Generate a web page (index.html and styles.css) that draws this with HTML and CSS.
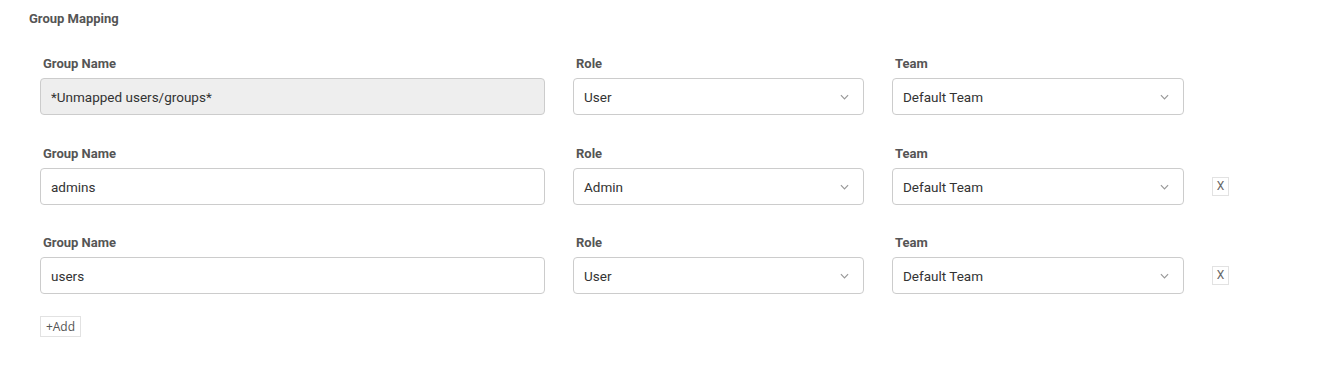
FILE: index.html
```html
<!DOCTYPE html>
<html lang="en">
<head>
    <meta charset="UTF-8">
    <meta name="viewport" content="width=device-width, initial-scale=1.0">
    <title>Group Mapping</title>
    <link rel="stylesheet" href="styles.css">
</head>
<body>
    <div class="section">
        <h3 class="section-title">Group Mapping</h3>

        <div class="mapping-list">
            <div class="mapping-row">
                <div class="field">
                    <label class="field-label">Group Name</label>
                    <input class="text-input" type="text" value="*Unmapped users/groups*" disabled>
                </div>
                <div class="field">
                    <label class="field-label">Role</label>
                    <div class="select">
                        <span>User</span>
                        <svg class="chevron" viewBox="0 0 10 6" width="10" height="6"><path d="M1 1l4 4 4-4" fill="none" stroke="#999" stroke-width="1.3"/></svg>
                    </div>
                </div>
                <div class="field">
                    <label class="field-label">Team</label>
                    <div class="select">
                        <span>Default Team</span>
                        <svg class="chevron" viewBox="0 0 10 6" width="10" height="6"><path d="M1 1l4 4 4-4" fill="none" stroke="#999" stroke-width="1.3"/></svg>
                    </div>
                </div>
                <div class="remove-cell"></div>
            </div>

            <div class="mapping-row">
                <div class="field">
                    <label class="field-label">Group Name</label>
                    <input class="text-input" type="text" value="admins">
                </div>
                <div class="field">
                    <label class="field-label">Role</label>
                    <div class="select">
                        <span>Admin</span>
                        <svg class="chevron" viewBox="0 0 10 6" width="10" height="6"><path d="M1 1l4 4 4-4" fill="none" stroke="#999" stroke-width="1.3"/></svg>
                    </div>
                </div>
                <div class="field">
                    <label class="field-label">Team</label>
                    <div class="select">
                        <span>Default Team</span>
                        <svg class="chevron" viewBox="0 0 10 6" width="10" height="6"><path d="M1 1l4 4 4-4" fill="none" stroke="#999" stroke-width="1.3"/></svg>
                    </div>
                </div>
                <div class="remove-cell">
                    <button class="small-btn remove-btn">X</button>
                </div>
            </div>

            <div class="mapping-row">
                <div class="field">
                    <label class="field-label">Group Name</label>
                    <input class="text-input" type="text" value="users">
                </div>
                <div class="field">
                    <label class="field-label">Role</label>
                    <div class="select">
                        <span>User</span>
                        <svg class="chevron" viewBox="0 0 10 6" width="10" height="6"><path d="M1 1l4 4 4-4" fill="none" stroke="#999" stroke-width="1.3"/></svg>
                    </div>
                </div>
                <div class="field">
                    <label class="field-label">Team</label>
                    <div class="select">
                        <span>Default Team</span>
                        <svg class="chevron" viewBox="0 0 10 6" width="10" height="6"><path d="M1 1l4 4 4-4" fill="none" stroke="#999" stroke-width="1.3"/></svg>
                    </div>
                </div>
                <div class="remove-cell">
                    <button class="small-btn remove-btn">X</button>
                </div>
            </div>

            <div class="add-row">
                <button class="small-btn add-btn">+Add</button>
            </div>
        </div>
    </div>
</body>
</html>
```

FILE: styles.css
```css
* {
    margin: 0;
    padding: 0;
    box-sizing: border-box;
}

body {
    font-family: Roboto, "Liberation Sans", Arial, sans-serif;
    background: #fff;
    color: #333;
}

.section {
    padding: 11px 0 0 29px;
}

.section-title {
    font-size: 13px;
    line-height: 15px;
    font-weight: 700;
    color: #555;
}

.mapping-list {
    padding: 30px 0 0 11px;
    display: flex;
    flex-direction: column;
    gap: 30.5px;
}

.mapping-row {
    display: grid;
    grid-template-columns: 505px 291px 292px 17px;
    column-gap: 28px;
}

.field {
    display: flex;
    flex-direction: column;
}

.field-label {
    font-size: 13px;
    line-height: 15px;
    font-weight: 700;
    color: #555;
    padding-left: 3px;
    margin-bottom: 7px;
}

.text-input,
.select {
    height: 37px;
    border: 1px solid #ccc;
    border-radius: 4px;
    background: #fff;
    font-family: inherit;
    font-size: 13.5px;
    color: #333;
}

.text-input {
    padding: 1px 10px 0;
    outline: none;
}

.text-input:disabled {
    background: #eee;
    color: #333;
}

.select {
    display: flex;
    align-items: center;
    justify-content: space-between;
    padding: 1px 14px 0 10px;
}

.chevron {
    display: block;
    width: 9px;
    height: 6px;
}

.remove-cell {
    padding-top: 29px;
}

.small-btn {
    background: #fff;
    border: 1px solid #e2e2e2;
    font-family: "Open Sans", "Liberation Sans", sans-serif;
    color: #555;
    cursor: pointer;
}

.remove-btn {
    width: 17px;
    height: 19px;
    font-family: Roboto, sans-serif;
    font-size: 12px;
    line-height: 17px;
    color: #666;
}

.add-row {
    margin-top: -8.5px;
}

.add-btn {
    width: 41px;
    height: 21px;
    font-size: 12px;
    line-height: 19px;
}
```
